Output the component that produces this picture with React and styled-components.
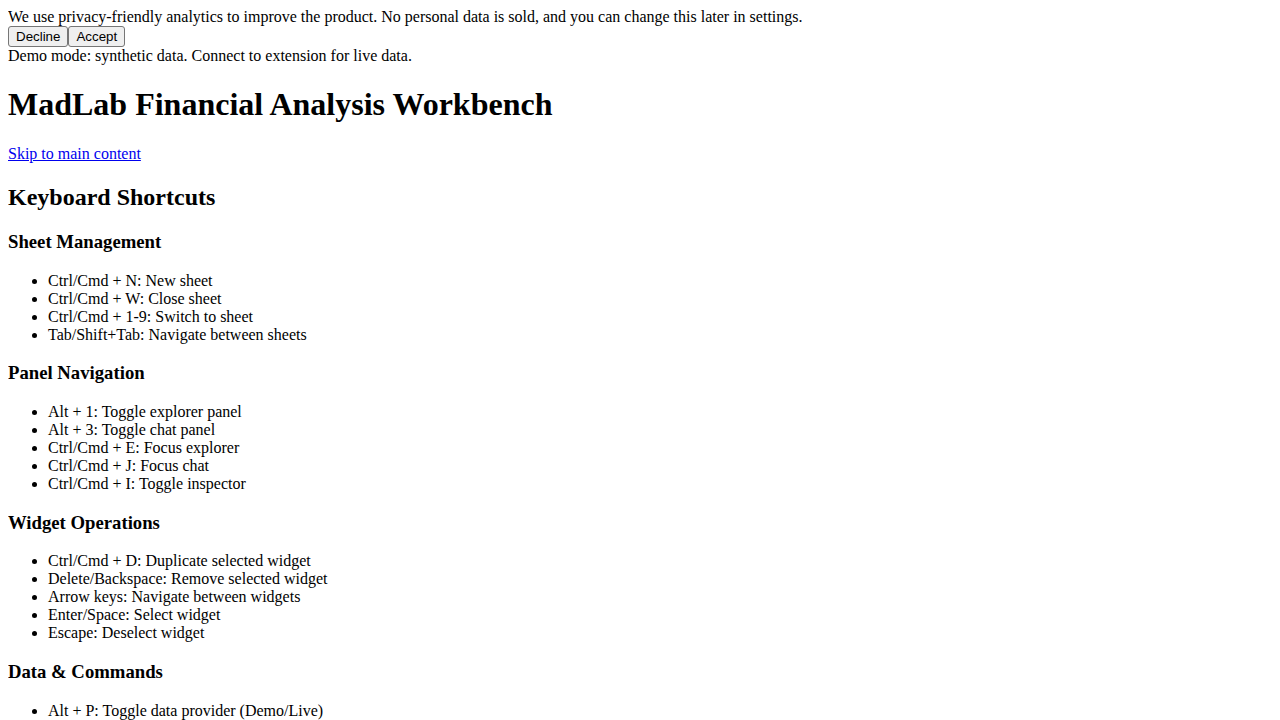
import React from 'react'
import styled, { createGlobalStyle } from 'styled-components'

const GlobalStyle = createGlobalStyle`
  body {
    margin: 8px;
    font-family: "Liberation Serif", "Times New Roman", serif;
    font-size: 16px;
    color: #000;
    background: #fff;
  }
`

const Banner = styled.div``

const BannerText = styled.div``

const ButtonRow = styled.div`
  display: flex;
`

const Button = styled.button`
  font-family: "Liberation Sans", Arial, sans-serif;
  font-size: 13.333px;
  padding: 2px 7px;
  margin: 0;
  color: #000;
  background: #efefef;
  border: 1px solid #767676;
  border-radius: 3px;
  line-height: normal;
`

const Notice = styled.div``

const Title = styled.h1`
  font-size: 2em;
  margin: 0.67em 0;
  font-weight: bold;
`

const SkipLink = styled.a`
  color: #0000ee;
  text-decoration: underline;
`

const SectionTitle = styled.h2`
  font-size: 1.5em;
  margin: 21px 0 0.83em;
`

const GroupTitle = styled.h3`
  font-size: 1.17em;
  margin: 1em 0;
`

const List = styled.ul`
  margin: 1em 0;
  padding-left: 40px;
  list-style: disc;
`

const groups = [
  {
    title: 'Sheet Management',
    items: [
      'Ctrl/Cmd + N: New sheet',
      'Ctrl/Cmd + W: Close sheet',
      'Ctrl/Cmd + 1-9: Switch to sheet',
      'Tab/Shift+Tab: Navigate between sheets',
    ],
  },
  {
    title: 'Panel Navigation',
    items: [
      'Alt + 1: Toggle explorer panel',
      'Alt + 3: Toggle chat panel',
      'Ctrl/Cmd + E: Focus explorer',
      'Ctrl/Cmd + J: Focus chat',
      'Ctrl/Cmd + I: Toggle inspector',
    ],
  },
  {
    title: 'Widget Operations',
    items: [
      'Ctrl/Cmd + D: Duplicate selected widget',
      'Delete/Backspace: Remove selected widget',
      'Arrow keys: Navigate between widgets',
      'Enter/Space: Select widget',
      'Escape: Deselect widget',
    ],
  },
  {
    title: 'Data & Commands',
    items: ['Alt + P: Toggle data provider (Demo/Live)'],
  },
]

export default function App() {
  return (
    <>
      <GlobalStyle />
      <Banner>
        <BannerText>
          We use privacy-friendly analytics to improve the product. No personal data is sold, and
          you can change this later in settings.
        </BannerText>
        <ButtonRow>
          <Button>Decline</Button>
          <Button>Accept</Button>
        </ButtonRow>
      </Banner>
      <Notice>Demo mode: synthetic data. Connect to extension for live data.</Notice>
      <Title>MadLab Financial Analysis Workbench</Title>
      <div>
        <SkipLink href="#main">Skip to main content</SkipLink>
      </div>
      <section>
        <SectionTitle>Keyboard Shortcuts</SectionTitle>
        {groups.map((g) => (
          <div key={g.title}>
            <GroupTitle>{g.title}</GroupTitle>
            <List>
              {g.items.map((it) => (
                <li key={it}>{it}</li>
              ))}
            </List>
          </div>
        ))}
      </section>
    </>
  )
}
